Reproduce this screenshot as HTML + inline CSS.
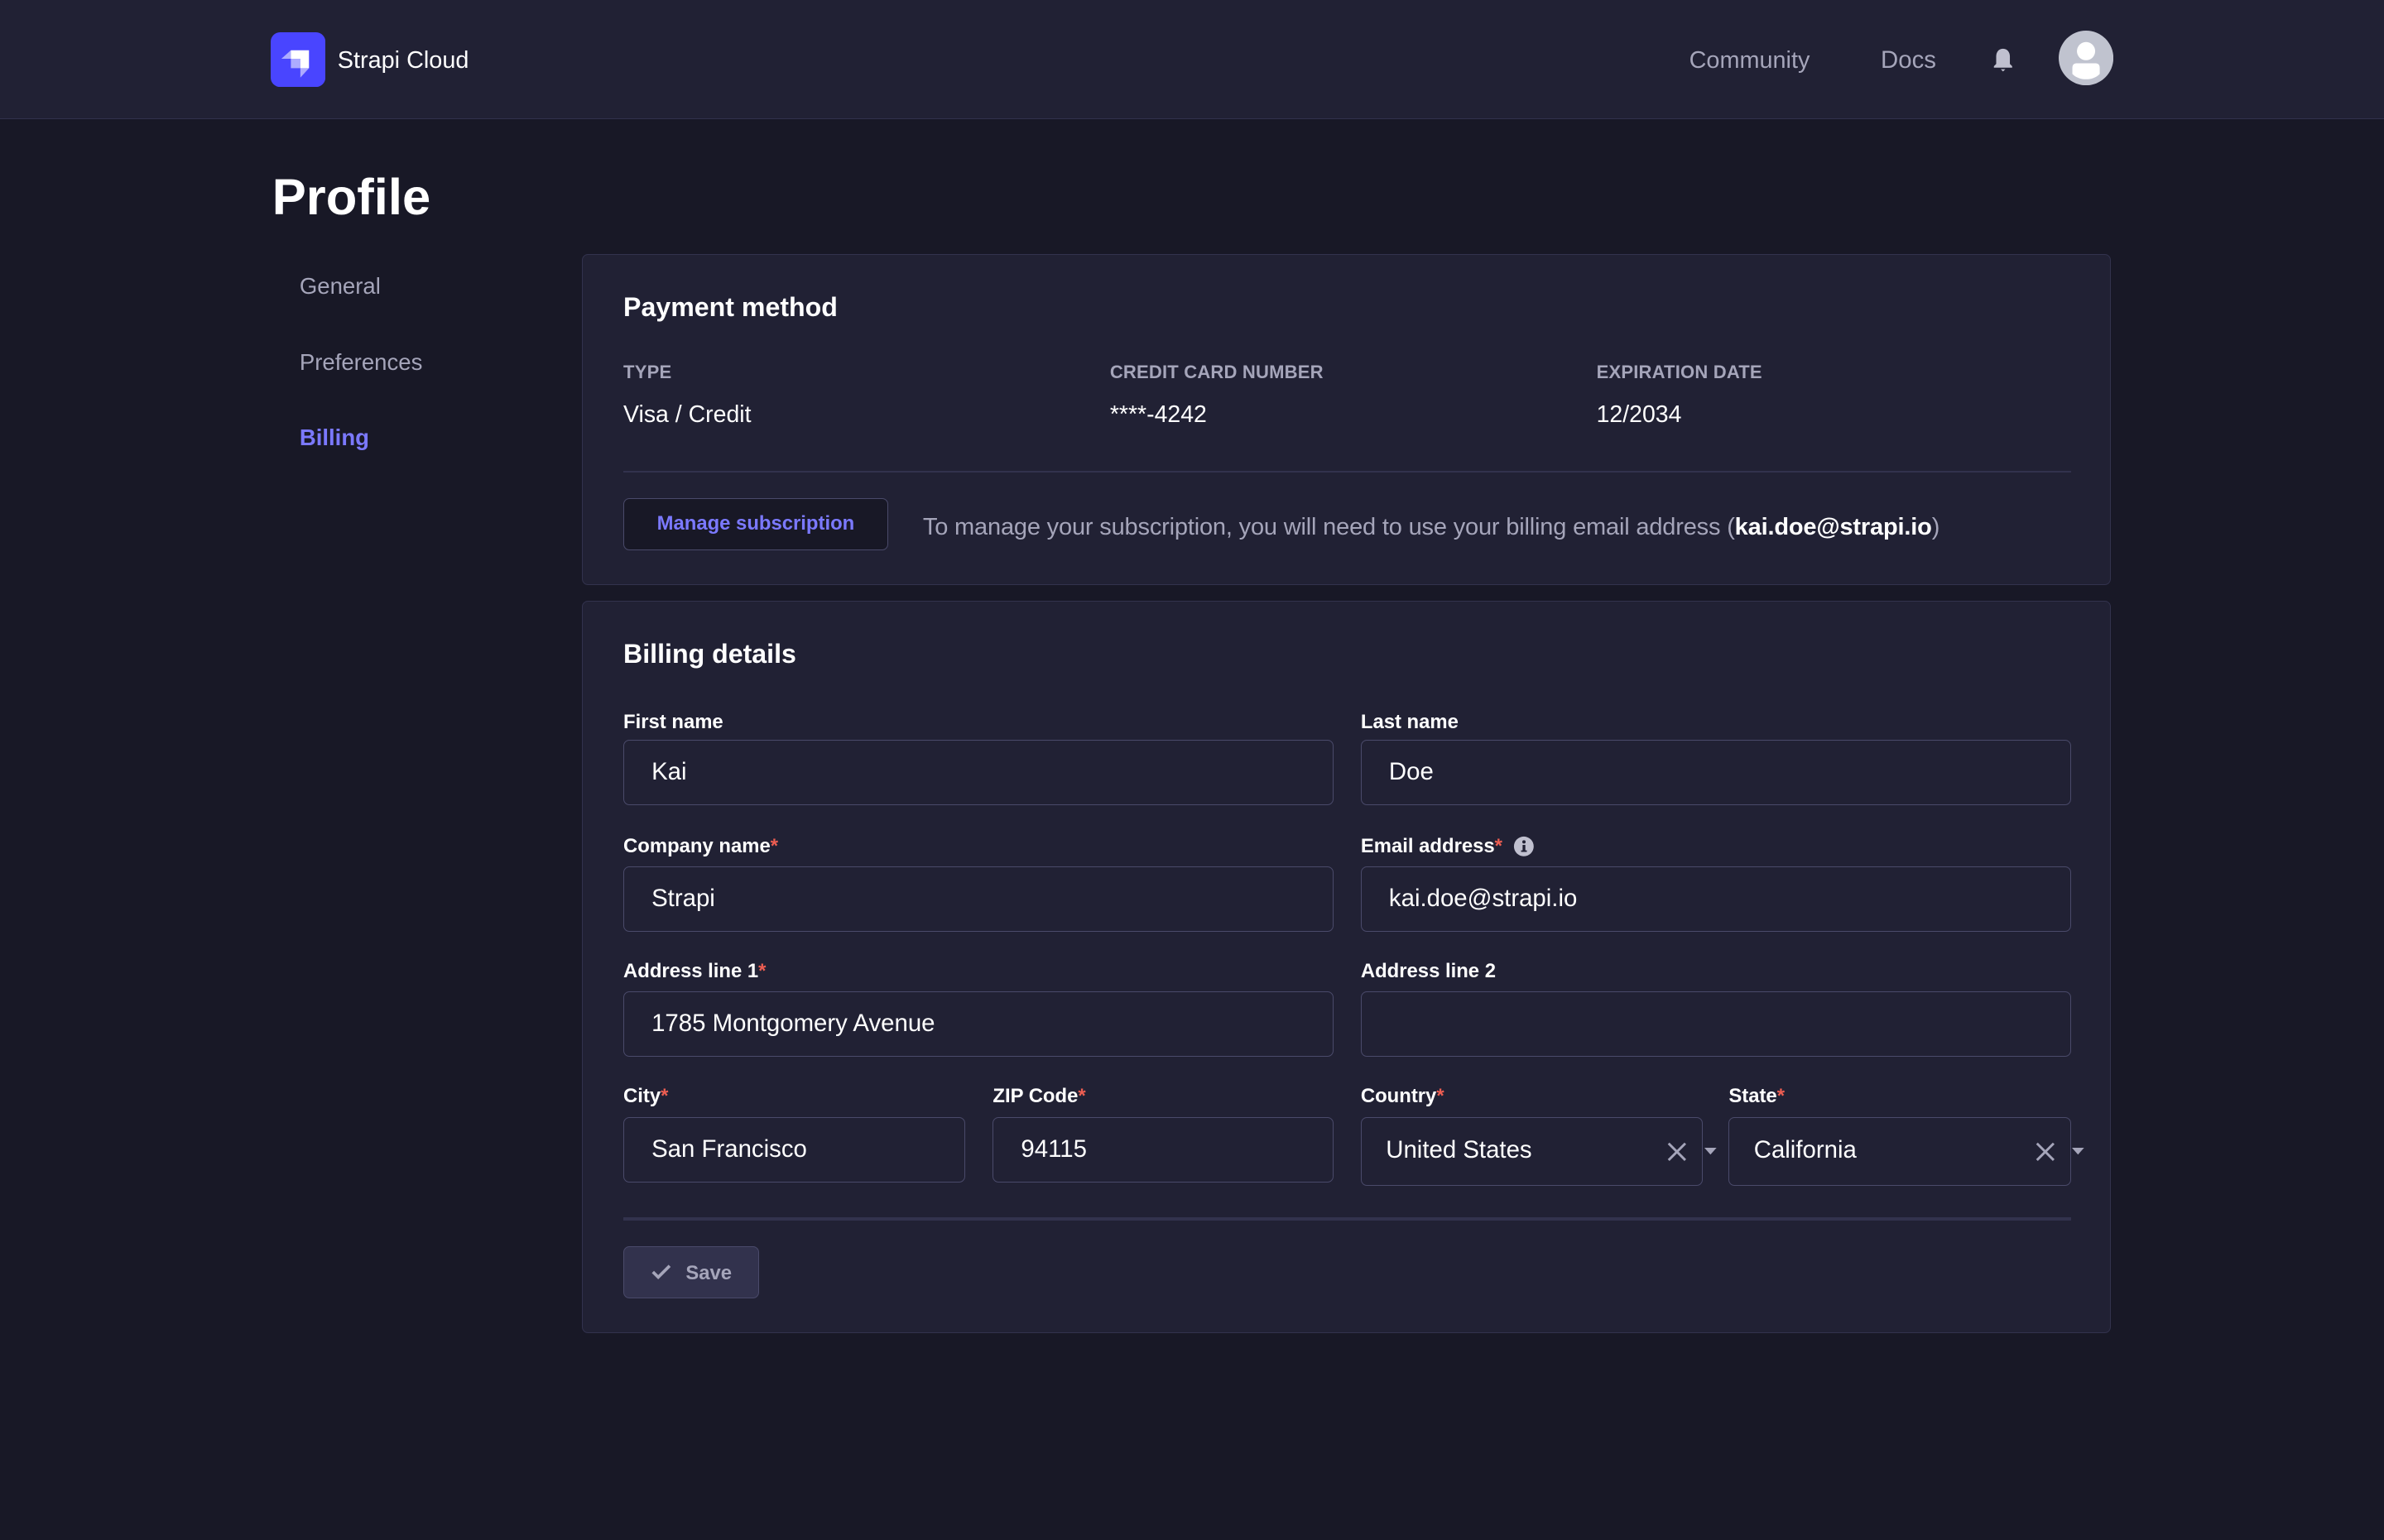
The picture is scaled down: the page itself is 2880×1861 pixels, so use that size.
<!DOCTYPE html>
<html><head><meta charset="utf-8"><style>
html,body{margin:0;padding:0;background:#181826;}
body{width:2880px;height:1860px;overflow:hidden;}
#r{position:relative;width:1568px;height:1013px;zoom:1.836735;font-family:"Liberation Sans",sans-serif;color:#fff;background:#181826;}
.a{position:absolute;white-space:nowrap;}
.hdr{position:absolute;left:0;top:0;width:1568px;height:78px;background:#212134;border-bottom:1px solid #32324d;}
.card{position:absolute;left:383px;width:1004px;background:#212134;border:1px solid #32324d;border-radius:4px;}
.lbl{font-size:13px;font-weight:bold;color:#fff;line-height:16px;}
.lbl i{color:#ee5e52;font-style:normal;}
.inp{position:absolute;box-sizing:border-box;height:43px;border:1px solid #4a4a6a;border-radius:4px;background:#212134;font-size:16px;line-height:41px;padding-left:18px;color:#fff;}
.cap{font-size:12px;font-weight:bold;color:#a5a5ba;letter-spacing:.1px;line-height:14px;}
.val{font-size:15.5px;color:#fff;line-height:18px;}
</style></head><body><div id="r">
<div class="hdr"></div>
<svg class="a" style="left:178px;top:21px" width="36" height="36" viewBox="0 0 64 64"><rect width="64" height="64" rx="11" fill="#4945ff"/><path d="M23.6 21H44.8V42H34.7V31H23.6Z" fill="#fff"/><path d="M12.5 31L23.6 21V31Z" fill="#fff" opacity=".55"/><path d="M23.6 31H34.7V42H23.6Z" fill="#fff" opacity=".55"/><path d="M34.7 42H44.8L34.7 53Z" fill="#fff" opacity=".55"/></svg>
<div class="a" style="left:222px;top:30px;font-size:15.7px;line-height:20px;">Strapi Cloud</div>
<div class="a" style="left:1111px;top:30px;font-size:15.7px;line-height:20px;color:#a5a5ba;">Community</div>
<div class="a" style="left:1237px;top:30px;font-size:16px;line-height:20px;color:#a5a5ba;">Docs</div>
<svg class="a" style="left:1310px;top:31px" width="15" height="17" viewBox="0 0 15 17"><path d="M7.5 1C4.7 1 3 3.3 3 6V11L1.5 12.5V13.5H13.5V12.5L12 11V6C12 3.3 10.3 1 7.5 1Z" fill="#c0c0cf"/><path d="M6 14.5H9L7.5 16Z" fill="#c0c0cf"/></svg>
<svg class="a" style="left:1354px;top:20px" width="36" height="36" viewBox="0 0 36 36"><circle cx="18" cy="18" r="18" fill="#c0c3cf"/><circle cx="18" cy="13.5" r="6" fill="#fff"/><path d="M9 24.5C9 22 10.5 21.5 12 21.5H24C25.5 21.5 27 22 27 24.5V28.5C24.5 31 21.5 32 18 32C14.5 32 11.5 31 9 28.5Z" fill="#fff"/></svg>
<div class="a" style="left:179px;top:109px;font-size:33.5px;font-weight:bold;line-height:42px;">Profile</div>
<div class="a" style="left:197px;top:179px;font-size:15px;line-height:18px;color:#a5a5ba;">General</div>
<div class="a" style="left:197px;top:229px;font-size:15px;line-height:18px;color:#a5a5ba;">Preferences</div>
<div class="a" style="left:197px;top:279px;font-size:15px;line-height:18px;color:#7b79ff;font-weight:bold;">Billing</div>

<div class="card" style="top:167px;height:217px;"></div>
<div class="a" style="left:410px;top:191px;font-size:17.5px;font-weight:bold;line-height:22px;">Payment method</div>
<div class="a cap" style="left:410px;top:238px;">TYPE</div>
<div class="a cap" style="left:730px;top:238px;">CREDIT CARD NUMBER</div>
<div class="a cap" style="left:1050px;top:238px;">EXPIRATION DATE</div>
<div class="a val" style="left:410px;top:264px;">Visa / Credit</div>
<div class="a val" style="left:730px;top:264px;">****-4242</div>
<div class="a val" style="left:1050px;top:264px;">12/2034</div>
<div class="a" style="left:410px;top:310px;width:952px;height:1px;background:#32324d;"></div>
<div class="a" style="left:410px;top:328px;width:173px;height:33px;border:1px solid #4a4a6a;border-radius:4px;background:#181826;color:#7b79ff;font-size:13px;font-weight:bold;line-height:33px;text-align:center;">Manage subscription</div>
<div class="a" style="left:607px;top:338px;font-size:15.8px;letter-spacing:-0.1px;line-height:18px;color:#a5a5ba;">To manage your subscription, you will need to use your billing email address (<b style="color:#fff;font-weight:600">kai.doe@strapi.io</b>)</div>

<div class="card" style="top:395px;height:481px;"></div>
<div class="a" style="left:410px;top:419px;font-size:17.5px;font-weight:bold;line-height:22px;">Billing details</div>
<div class="a lbl" style="left:410px;top:467px;">First name</div>
<div class="a lbl" style="left:895px;top:467px;">Last name</div>
<div class="inp" style="left:410px;top:487px;width:467px;">Kai</div>
<div class="inp" style="left:895px;top:487px;width:467px;">Doe</div>
<div class="a lbl" style="left:410px;top:549px;">Company name<i>*</i></div>
<div class="a lbl" style="left:895px;top:549px;">Email address<i>*</i></div>
<svg class="a" style="left:995px;top:550px" width="14" height="14" viewBox="0 0 14 14"><circle cx="7" cy="7" r="6.5" fill="#c0c0cf"/><rect x="6.2" y="6" width="1.8" height="4.5" fill="#212134"/><rect x="5.2" y="9.6" width="3.8" height="1" fill="#212134"/><circle cx="7.1" cy="4" r="1.1" fill="#212134"/></svg>
<div class="inp" style="left:410px;top:570px;width:467px;">Strapi</div>
<div class="inp" style="left:895px;top:570px;width:467px;">kai.doe@strapi.io</div>
<div class="a lbl" style="left:410px;top:631px;">Address line 1<i>*</i></div>
<div class="a lbl" style="left:895px;top:631px;">Address line 2</div>
<div class="inp" style="left:410px;top:652px;width:467px;">1785 Montgomery Avenue</div>
<div class="inp" style="left:895px;top:652px;width:467px;"></div>
<div class="a lbl" style="left:410px;top:713px;">City<i>*</i></div>
<div class="a lbl" style="left:653px;top:713px;">ZIP Code<i>*</i></div>
<div class="a lbl" style="left:895px;top:713px;">Country<i>*</i></div>
<div class="a lbl" style="left:1137px;top:713px;">State<i>*</i></div>
<div class="inp" style="left:410px;top:735px;width:225px;">San Francisco</div>
<div class="inp" style="left:653px;top:735px;width:224px;">94115</div>
<div class="inp" style="left:895px;top:735px;width:225px;height:45px;line-height:43px;padding-left:16px;">United States</div>
<div class="inp" style="left:1137px;top:735px;width:225px;height:45px;line-height:43px;padding-left:16px;">California</div>
<svg class="a" style="left:1096px;top:751px" width="14" height="14" viewBox="0 0 14 14"><path d="M1.5 1.5L12.5 12.5M12.5 1.5L1.5 12.5" stroke="#a5a5ba" stroke-width="1.6"/></svg>
<svg class="a" style="left:1121px;top:755px" width="8" height="5" viewBox="0 0 8 5"><path d="M0 0H8L4 4.5Z" fill="#a5a5ba"/></svg>
<svg class="a" style="left:1338px;top:751px" width="14" height="14" viewBox="0 0 14 14"><path d="M1.5 1.5L12.5 12.5M12.5 1.5L1.5 12.5" stroke="#a5a5ba" stroke-width="1.6"/></svg>
<svg class="a" style="left:1363px;top:755px" width="8" height="5" viewBox="0 0 8 5"><path d="M0 0H8L4 4.5Z" fill="#a5a5ba"/></svg>
<div class="a" style="left:410px;top:801px;width:952px;height:2px;background:#32324d;"></div>
<div class="a" style="left:410px;top:820px;width:88px;height:33px;border:1px solid #4a4a6a;border-radius:4px;background:#32324d;"></div>
<svg class="a" style="left:428px;top:831px" width="14" height="12" viewBox="0 0 14 12"><path d="M1.5 6L5 9.5L12.5 2" stroke="#a5a5ba" stroke-width="2" fill="none"/></svg>
<div class="a" style="left:451px;top:830px;font-size:13px;font-weight:bold;line-height:16px;color:#a5a5ba;">Save</div>
</div></body></html>
